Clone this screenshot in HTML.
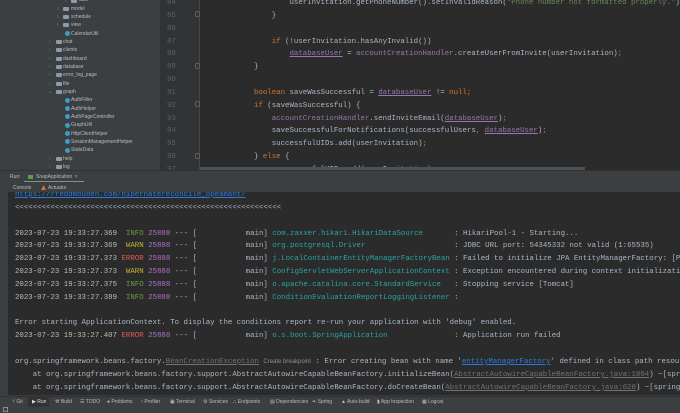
<!DOCTYPE html>
<html><head><meta charset="utf-8"><style>
*{margin:0;padding:0;box-sizing:border-box}
body{width:680px;height:413px;overflow:hidden;background:#2b2b2b;position:relative;font-family:"Liberation Sans",sans-serif}
.a{position:absolute;white-space:pre}
.clip{position:absolute;overflow:hidden}
.m{font-family:"Liberation Mono",monospace;font-size:7.4px;line-height:9px;color:#a9b7c6}
.t{font-size:5px;color:#bbbbbb;line-height:6px}
.ln{font-family:"Liberation Mono",monospace;font-size:7.4px;color:#5c6066;line-height:9px}
.k{color:#cc7832}.p{color:#9876aa}.s{color:#6a8759}.u{text-decoration:underline}
.ts{color:#bbbbbb}.i{color:#5fa04b}.w{color:#bbb529}.e{color:#e05a5a}.pid{color:#b16fc7}.c{color:#2aa5a5}
.lk{color:#287bde;text-decoration:underline}.g{color:#6f7377;text-decoration:underline}
.fold{position:absolute;width:5px;height:6px;border:1px solid #5c6066;border-radius:2px}
.fo{position:absolute;width:6px;height:4px;background:#8e9aa8;border-radius:1px}
.ar{position:absolute;font-size:5px;color:#8a8d90;line-height:6px}
.ci{position:absolute;width:5px;height:5px;border-radius:50%;background:#3d9bc4}
</style></head><body>
<!-- project tree -->
<div class="a" style="left:0;top:0;width:160px;height:170px;background:#3c3f41"></div>
<div class="ar" style="left:65px;top:-2px">›</div><div class="fo" style="left:71px;top:-1px"></div><div class="a t" style="left:79px;top:-3px">utils</div>
<div class="ar" style="left:57px;top:6px">›</div><div class="fo" style="left:63px;top:7px"></div><div class="a t" style="left:71px;top:6px">model</div>
<div class="ar" style="left:57px;top:14px">›</div><div class="fo" style="left:63px;top:15px"></div><div class="a t" style="left:71px;top:14px">schedule</div>
<div class="ar" style="left:57px;top:22px">›</div><div class="fo" style="left:63px;top:23px"></div><div class="a t" style="left:71px;top:22px">view</div>
<div class="ci" style="left:65px;top:31px"></div><div class="a t" style="left:71px;top:31px">CalendarUtil</div>
<div class="ar" style="left:49px;top:39px">›</div><div class="fo" style="left:56px;top:40px"></div><div class="a t" style="left:63px;top:39px">chat</div>
<div class="ar" style="left:49px;top:47px">›</div><div class="fo" style="left:56px;top:48px"></div><div class="a t" style="left:63px;top:47px">clients</div>
<div class="ar" style="left:49px;top:56px">›</div><div class="fo" style="left:56px;top:57px"></div><div class="a t" style="left:63px;top:56px">dashboard</div>
<div class="ar" style="left:49px;top:64px">›</div><div class="fo" style="left:56px;top:65px"></div><div class="a t" style="left:63px;top:64px">database</div>
<div class="ar" style="left:49px;top:72px">›</div><div class="fo" style="left:56px;top:73px"></div><div class="a t" style="left:63px;top:72px">error_log_page</div>
<div class="ar" style="left:49px;top:81px">›</div><div class="fo" style="left:56px;top:82px"></div><div class="a t" style="left:63px;top:81px">file</div>
<div class="ar" style="left:48px;top:89px">⌄</div><div class="fo" style="left:56px;top:90px"></div><div class="a t" style="left:63px;top:89px">graph</div>
<div class="ci" style="left:65px;top:98px"></div><div class="a t" style="left:71px;top:97px">AuthFilter</div>
<div class="ci" style="left:65px;top:106px"></div><div class="a t" style="left:71px;top:106px">AuthHelper</div>
<div class="ci" style="left:65px;top:114px"></div><div class="a t" style="left:71px;top:114px">AuthPageController</div>
<div class="ci" style="left:65px;top:123px"></div><div class="a t" style="left:71px;top:122px">GraphUtil</div>
<div class="ci" style="left:65px;top:131px"></div><div class="a t" style="left:71px;top:131px">HttpClientHelper</div>
<div class="ci" style="left:65px;top:139px"></div><div class="a t" style="left:71px;top:139px">SessionManagementHelper</div>
<div class="ci" style="left:65px;top:148px"></div><div class="a t" style="left:71px;top:147px">StateData</div>
<div class="ar" style="left:49px;top:156px">›</div><div class="fo" style="left:56px;top:157px"></div><div class="a t" style="left:63px;top:156px">help</div>
<div class="ar" style="left:49px;top:164px">›</div><div class="fo" style="left:56px;top:165px"></div><div class="a t" style="left:63px;top:164px">log</div>
<!-- gutter -->
<div class="a" style="left:160px;top:0;width:40px;height:170px;background:#313335"></div>
<div class="a" style="left:199px;top:0;width:1px;height:170px;background:#45484a"></div>
<div class="a ln" style="left:167px;top:-3px;line-height:12.85px">84
85
86
87
88
89
90
91
92
93
94
95
96
97</div>
<div class="fold" style="left:195px;top:11px"></div>
<div class="fold" style="left:195px;top:63px"></div>
<div class="fold" style="left:195px;top:101px"></div>
<div class="fold" style="left:195px;top:153px"></div>
<!-- code -->
<div class="clip" style="left:200px;top:0;width:480px;height:170px">
<div class="a m" style="left:54px;top:-3px;line-height:12.85px">        userInvitation.getPhoneNumber().setInvalidReason(<span class="s">"Phone number not formatted properly."</span>)
    }

    <span class="k">if</span> (!userInvitation.hasAnyInvalid())
        <span class="p u">databaseUser</span> = <span class="p">accountCreationHandler</span>.createUserFromInvite(userInvitation)<span class="k">;</span>
}

<span class="k">boolean</span> saveWasSuccessful = <span class="p u">databaseUser</span> != <span class="k">null;</span>
<span class="k">if</span> (saveWasSuccessful) {
    <span class="p">accountCreationHandler</span>.sendInviteEmail(<span class="p u">databaseUser</span>)<span class="k">;</span>
    saveSuccessfulForNotifications(successfulUsers<span class="k">,</span> <span class="p u">databaseUser</span>)<span class="k">;</span>
    successfulUIDs.add(userInvitation)<span class="k">;</span>
} <span class="k">else</span> {
    unsuccessfulUIDs.add(userInvitation)<span class="k">;</span></div>
</div>
<div class="a" style="left:200px;top:167px;width:385px;height:3px;background:#4e5254"></div>
<!-- tool window header -->
<div class="a" style="left:0;top:170px;width:680px;height:22px;background:#3c3f41;border-top:1px solid #323232"></div>
<div class="a t" style="left:10px;top:174px">Run:</div>
<div class="a" style="left:28px;top:175px;width:5px;height:4px;background:#5f9e4a"></div>
<div class="a t" style="left:36px;top:174px">SnapApplication  ×</div>
<div class="a" style="left:24px;top:181px;width:60px;height:1px;background:#8a8d90"></div>
<div class="a t" style="left:13px;top:185px">Console</div>
<div class="a" style="left:41px;top:185px;width:5px;height:5px;background:#d8702a;clip-path:polygon(50% 0,100% 100%,0 100%)"></div>
<div class="a t" style="left:48px;top:185px">Actuator</div>
<!-- left stripe -->
<div class="a" style="left:0;top:192px;width:8px;height:221px;background:#3c3f41"></div>
<!-- console -->
<div class="clip" style="left:8px;top:192px;width:672px;height:200px">
<div class="a m" style="left:7px;top:-3px;line-height:12.85px"><span class="lk">https://rfeddmouden.com/hibernatereconcile_opeamant/</span>
&lt;&lt;&lt;&lt;&lt;&lt;&lt;&lt;&lt;&lt;&lt;&lt;&lt;&lt;&lt;&lt;&lt;&lt;&lt;&lt;&lt;&lt;&lt;&lt;&lt;&lt;&lt;&lt;&lt;&lt;&lt;&lt;&lt;&lt;&lt;&lt;&lt;&lt;&lt;&lt;&lt;&lt;&lt;&lt;&lt;&lt;&lt;&lt;&lt;&lt;&lt;&lt;&lt;&lt;&lt;&lt;&lt;&lt;&lt;&lt;

<span class="ts">2023-07-23 19:33:27.369</span>  <span class="i">INFO</span> <span class="pid">25888</span> --- [           main] <span class="c">com.zaxxer.hikari.HikariDataSource      </span> : HikariPool-1 - Starting...
<span class="ts">2023-07-23 19:33:27.369</span>  <span class="w">WARN</span> <span class="pid">25888</span> --- [           main] <span class="c">org.postgresql.Driver                   </span> : JDBC URL port: 54345332 not valid (1:65535)
<span class="ts">2023-07-23 19:33:27.373</span> <span class="e">ERROR</span> <span class="pid">25888</span> --- [           main] <span class="c">j.LocalContainerEntityManagerFactoryBean</span> : Failed to initialize JPA EntityManagerFactory: [PersistenceUnit
<span class="ts">2023-07-23 19:33:27.373</span>  <span class="w">WARN</span> <span class="pid">25888</span> --- [           main] <span class="c">ConfigServletWebServerApplicationContext</span> : Exception encountered during context initialization
<span class="ts">2023-07-23 19:33:27.375</span>  <span class="i">INFO</span> <span class="pid">25888</span> --- [           main] <span class="c">o.apache.catalina.core.StandardService  </span> : Stopping service [Tomcat]
<span class="ts">2023-07-23 19:33:27.389</span>  <span class="i">INFO</span> <span class="pid">25888</span> --- [           main] <span class="c">ConditionEvaluationReportLoggingListener</span> :

Error starting ApplicationContext. To display the conditions report re-run your application with 'debug' enabled.
<span class="ts">2023-07-23 19:33:27.407</span> <span class="e">ERROR</span> <span class="pid">25888</span> --- [           main] <span class="c">o.s.boot.SpringApplication              </span> : Application run failed

org.springframework.beans.factory.<span class="g">BeanCreationException</span> <span style="font-family:'Liberation Sans',sans-serif;font-size:6px;color:#8a8d90">Create breakpoint</span> : Error creating bean with name '<span class="lk">entityManagerFactory</span>' defined in class path resource
    at org.springframework.beans.factory.support.AbstractAutowireCapableBeanFactory.initializeBean(<span class="g">AbstractAutowireCapableBeanFactory.java:1804</span>) ~[spring-beans
    at org.springframework.beans.factory.support.AbstractAutowireCapableBeanFactory.doCreateBean(<span class="g">AbstractAutowireCapableBeanFactory.java:620</span>) ~[spring-beans</div>
</div>
<div class="a" style="left:8px;top:392px;width:672px;height:4px;background:#2b2b2b;border-bottom:1px solid #3a3a3a"></div>
<!-- bottom toolbar -->
<div class="a" style="left:0;top:396px;width:680px;height:17px;background:#3c3f41;border-top:1px solid #323232"></div>
<div class="a" style="left:28px;top:397px;width:21px;height:10px;background:#313335"></div>
<div class="a t" style="top:399px;left:12px">ᛘ Git</div>
<div class="a t" style="top:399px;left:32px;color:#ddd">▶ Run</div>
<div class="a t" style="top:399px;left:55px">⚒ Build</div>
<div class="a t" style="top:399px;left:80px">☰ TODO</div>
<div class="a t" style="top:399px;left:107px">● Problems</div>
<div class="a t" style="top:399px;left:140px">◔ Profiler</div>
<div class="a t" style="top:399px;left:170px">▣ Terminal</div>
<div class="a t" style="top:399px;left:203px">⚙ Services</div>
<div class="a t" style="top:399px;left:233px">⛬ Endpoints</div>
<div class="a t" style="top:399px;left:270px">▤ Dependencies</div>
<div class="a t" style="top:399px;left:312px">❧ Spring</div>
<div class="a t" style="top:399px;left:341px">▲ Auto-build</div>
<div class="a t" style="top:399px;left:377px">▮ App Inspection</div>
<div class="a t" style="top:399px;left:422px">▦ Logcat</div>
<div class="a" style="left:3px;top:407px;width:5px;height:5px;border:1px solid #8a8d90"></div>
</body></html>
